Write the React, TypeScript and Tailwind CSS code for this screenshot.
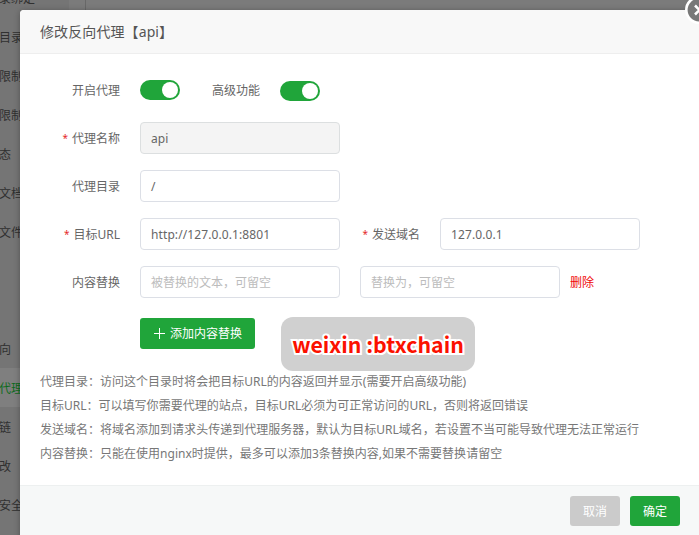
import type { ReactNode } from "react";

const menu = ["子目录绑定", "网站目录", "访问限制", "流量限制", "伪静态", "默认文档", "配置文件", "SSL", "PHP", "重定向", "反向代理", "防盗链", "防篡改", "网站安全"];

const notes = [
  "代理目录：访问这个目录时将会把目标URL的内容返回并显示(需要开启高级功能)",
  "目标URL：可以填写你需要代理的站点，目标URL必须为可正常访问的URL，否则将返回错误",
  "发送域名：将域名添加到请求头传递到代理服务器，默认为目标URL域名，若设置不当可能导致代理无法正常运行",
  "内容替换：只能在使用nginx时提供，最多可以添加3条替换内容,如果不需要替换请留空",
];

function Label({ children, required }: { children: ReactNode; required?: boolean }) {
  return (
    <div className="flex w-[100px] shrink-0 items-center justify-end pt-0.5 pr-5 text-[#666]">
      {required && <span className="mr-1 pb-0.5 text-[10px] leading-[14px] text-[#e52a2a]">*</span>}
      <span>{children}</span>
    </div>
  );
}

function Toggle() {
  return (
    <div className="flex h-5 w-10 items-center justify-end rounded-full bg-[#20a53a] pr-0.5">
      <div className="size-4 rounded-full bg-white" />
    </div>
  );
}

function Field({ value, hint, disabled }: { value?: string; hint?: string; disabled?: boolean }) {
  return (
    <div className={`flex h-8 w-[200px] shrink-0 items-center rounded border px-2.5 pt-0.5 ${disabled ? "border-[#dcdfe0] bg-[#f4f4f4]" : "border-[#dcdfe6] bg-white"} ${hint ? "text-[#bcbcbc]" : "tracking-[0.1px] text-[#666]"}`}>
      <span>{value ?? hint}</span>
    </div>
  );
}

export default function App() {
  return (
    <div className="relative h-[535px] w-[699px] overflow-hidden bg-[#7b7b7b] font-['Noto_Sans','Noto_Sans_CJK_SC',sans-serif] text-[12px] leading-[18px]">
      <div className="flex h-full">
        <nav className="-mt-[22px] h-[560px] w-[69px] overflow-hidden bg-[#757575] text-[#303030]">
          {menu.map((item) => (
            <div key={item} className={`flex h-[39px] items-center pt-0.5 pl-px ${item === "反向代理" ? "bg-[#7f7f7f] text-[#0d6b1d]" : ""}`}>
              <span className="-ml-[26px] whitespace-nowrap">{item}</span>
            </div>
          ))}
        </nav>
        <div className="ml-4 flex-1 border-l border-[#686868]" />
      </div>

      <section className="absolute top-[10px] left-5 flex h-[545px] w-[690px] flex-col rounded-sm bg-white shadow-[0_1px_6px_rgba(0,0,0,0.3)]">
        <header className="flex h-11 items-center rounded-t-sm border-b border-[#eee] bg-[#f8f8f8] px-5 text-[14px] tracking-[0.1px] text-[#555]">
          <span>修改反向代理【api】</span>
        </header>
        <div className="flex h-[431px] flex-col px-5 pt-5">
          <div className="flex h-8 items-center">
            <Label>开启代理</Label>
            <Toggle />
            <Label>高级功能</Label>
            <div className="pt-0.5"><Toggle /></div>
          </div>
          <div className="mt-4 flex h-8">
            <Label required>代理名称</Label>
            <Field value="api" disabled />
          </div>
          <div className="mt-4 flex h-8">
            <Label>代理目录</Label>
            <Field value="/" />
          </div>
          <div className="mt-4 flex h-8">
            <Label required>目标URL</Label>
            <Field value="http://127.0.0.1:8801" />
            <Label required>发送域名</Label>
            <Field value="127.0.0.1" />
          </div>
          <div className="mt-4 flex h-8">
            <Label>内容替换</Label>
            <Field hint="被替换的文本，可留空" />
            <div className="w-5" />
            <Field hint="替换为，可留空" />
            <span className="flex items-center pt-0.5 pl-2.5 text-[#ef0808]">删除</span>
          </div>
          <div className="mt-5 ml-[100px] flex h-[31px] w-[115px] items-center rounded-[3px] bg-[#20a53a] pl-3.5 text-white">
            <svg className="mr-[5px]" width="11" height="11" viewBox="0 0 11 11" stroke="currentColor"><path d="M0 5.5H11M5.5 0V11" /></svg>
            <span className="pt-px">添加内容替换</span>
          </div>
          <div className="mt-[21px] leading-6 tracking-[0.01px] text-[#777]">
            {notes.map((note) => (
              <p key={note} className="whitespace-nowrap">{note}</p>
            ))}
          </div>
        </div>
        <footer className="flex flex-1 items-start gap-2.5 border-t border-[#edf0f0] bg-[#f6f8f8] pt-2.5 pl-[550px] text-white">
          <div className="flex h-[30px] w-[50px] items-center justify-center rounded-[3px] bg-[#cbcbcb] pt-0.5"><span>取消</span></div>
          <div className="flex h-[30px] w-[50px] items-center justify-center rounded-[3px] bg-[#20a53a] pt-0.5"><span>确定</span></div>
        </footer>
      </section>

      <div className="absolute top-[317px] left-[281px] flex h-[54px] w-[194px] items-center justify-center rounded-[12px] bg-[#d0d0d0]">
        <span className="font-['Noto_Sans_CJK_SC',sans-serif] text-[21.3px] leading-7 font-bold whitespace-nowrap text-[#fb1100] [paint-order:stroke_fill] [-webkit-text-stroke:4px_white]">weixin :btxchain</span>
      </div>

      <svg className="absolute -top-[4px] left-[685px]" width="28" height="28" viewBox="0 0 28 28">
        <circle cx="14" cy="14" r="12.7" fill="#787878" stroke="white" strokeWidth="2.6" />
        <path d="M10 9.5L19 18.5M19 9.5L10 18.5" stroke="white" strokeWidth="2.6" />
      </svg>
    </div>
  );
}
